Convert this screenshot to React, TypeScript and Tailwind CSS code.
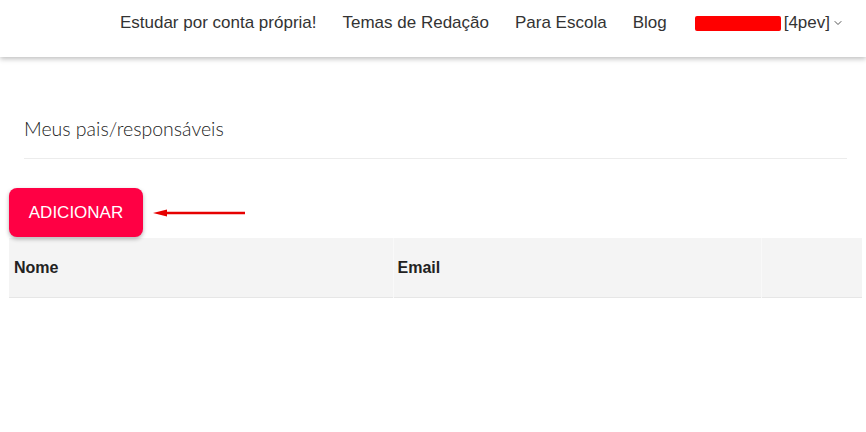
import { ChevronDown } from "lucide-react";

const navLinks = ["Estudar por conta própria!", "Temas de Redação", "Para Escola", "Blog"];

export default function App() {
  return (
    <main className="min-h-screen bg-white font-['Liberation_Sans',Arial,sans-serif] text-[#333]">
      <header className="h-[57px] bg-white shadow-[0_2px_5px_rgba(0,0,0,0.25)] relative z-10">
        <nav className="flex justify-end items-center h-[46px] pr-[22px] text-[17px]">
          {navLinks.map((l) => (
            <a key={l} className="ml-[26px] text-[#333]">{l}</a>
          ))}
          <div className="ml-[28px] flex items-center">
            <span className="w-[86px] h-[15px] bg-[#ff0000] rounded-[2px]" />
            <span className="ml-[3px]">[4pev]</span>
            <ChevronDown className="ml-[2px] w-[12px] h-[12px] text-[#555]" strokeWidth={2} />
          </div>
        </nav>
      </header>

      <section className="px-[24px] pt-[57px]">
        <h2 className="font-['Lato',sans-serif] font-light text-[19.5px] text-[#222] pb-[15px] border-b border-[#ececec] mr-[-5px]">
          Meus pais/responsáveis
        </h2>
      </section>

      <div className="px-[9px] pt-[29px] pr-[4px]">
        <div className="flex items-center">
          <button className="w-[134px] h-[49px] rounded-[8px] bg-[#ff0044] text-white text-[17px] shadow-[0_2px_4px_rgba(0,0,0,0.3)] relative z-10">
            ADICIONAR
          </button>
          <svg width="94" height="10" viewBox="0 0 94 10" className="ml-[10px]">
            <line x1="8" y1="5" x2="92" y2="5" stroke="#e60000" strokeWidth="2.5" />
            <polygon points="0,5 14,1.5 14,8.5" fill="#e60000" />
          </svg>
        </div>

        <table className="w-full text-left mt-[1px] border-collapse">
          <thead className="bg-[#f4f4f4]">
            <tr className="h-[59px] border-b border-[#e6e6e6]">
              <th className="w-[384px] pl-[5px] font-bold text-[16px] text-[#222] border-r border-[#f9f9f9]">Nome</th>
              <th className="w-[368px] pl-[4px] font-bold text-[16px] text-[#222] border-r border-[#f9f9f9]">Email</th>
              <th></th>
            </tr>
          </thead>
          <tbody></tbody>
        </table>
      </div>
    </main>
  );
}
